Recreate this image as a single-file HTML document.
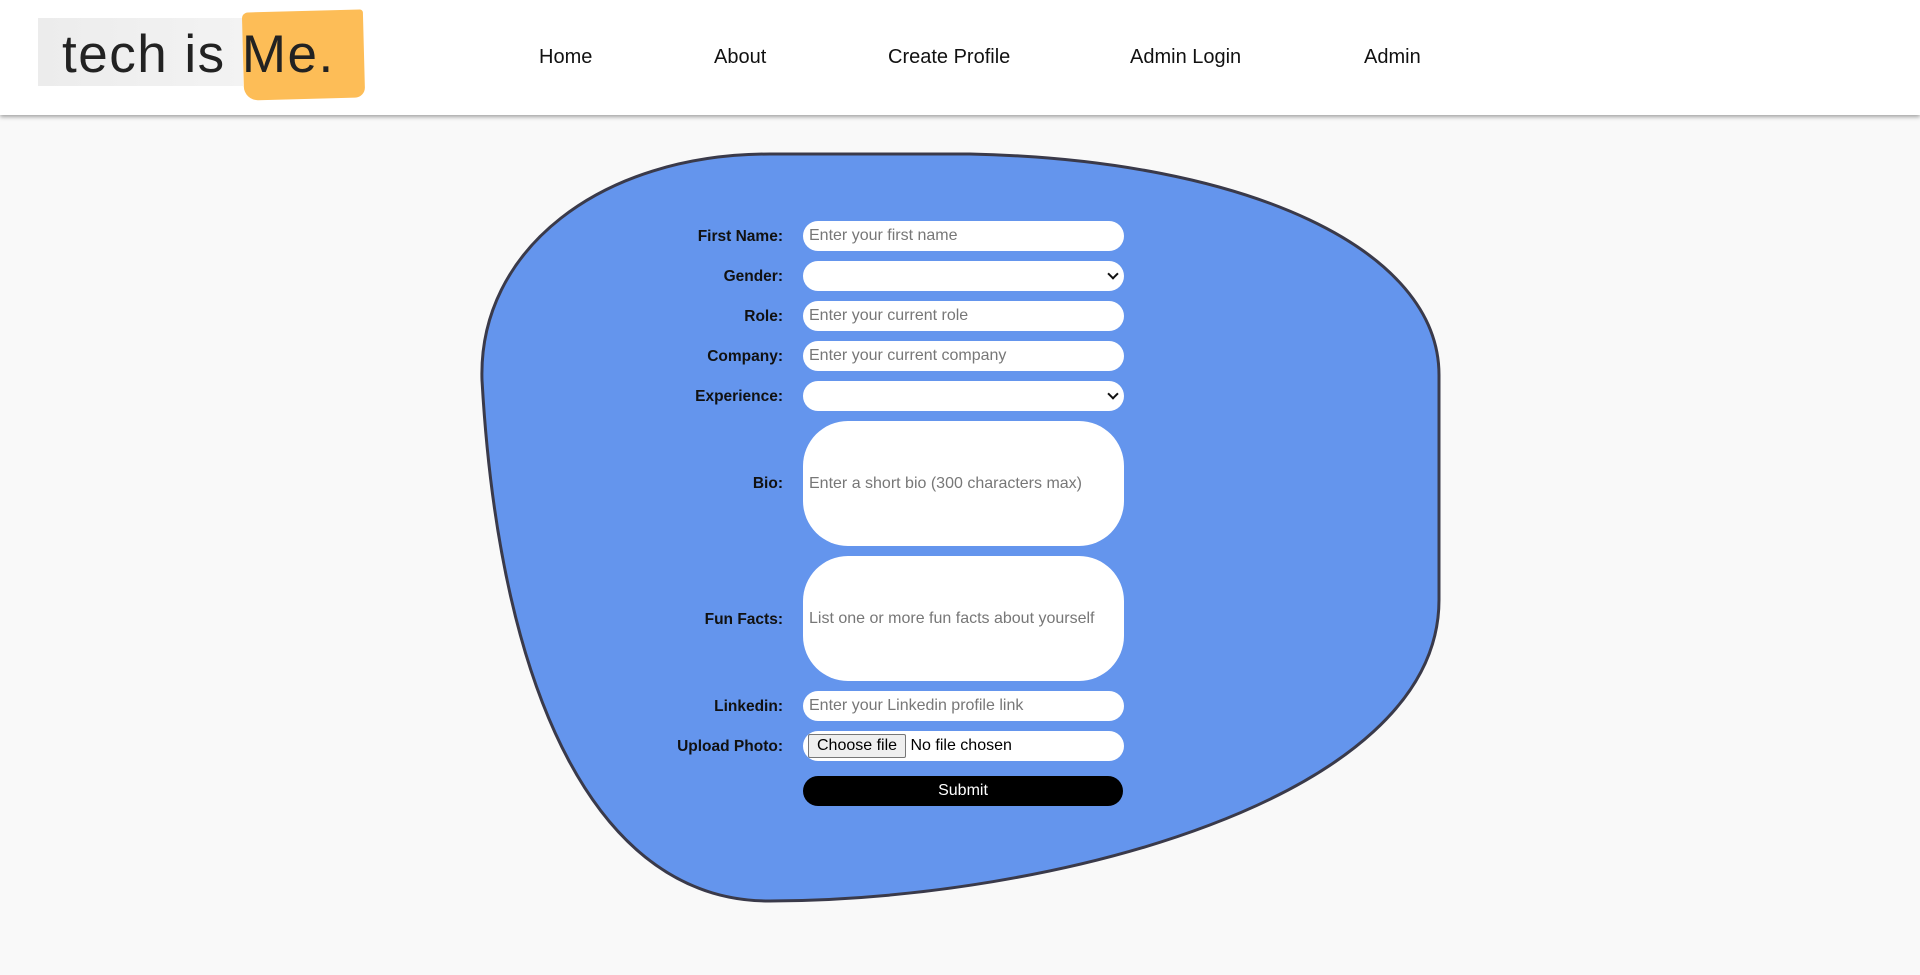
<!DOCTYPE html>
<html><head><meta charset="utf-8"><style>
*{box-sizing:border-box;margin:0;padding:0}
body{width:1920px;height:975px;background:#f9f9f9;font-family:"Liberation Sans",Arial,sans-serif;position:relative;overflow:hidden}
.hdr{position:absolute;left:0;top:0;width:1920px;height:115px;background:#fff;box-shadow:0 2px 4px rgba(0,0,0,.35)}
.logo-g{position:absolute;left:38px;top:18px;width:205px;height:68px;background:linear-gradient(90deg,#ececec,#f3f3f3)}
.logo-o{position:absolute;left:243px;top:11px;width:121px;height:88px;background:#fdbd57;border-radius:6px 3px 10px 14px;transform:rotate(-1.5deg)}
.logo-t{position:absolute;left:62px;top:24px;font-size:53px;color:#222;letter-spacing:1.5px}
.nav{position:absolute;top:46px;font-size:20px;color:#111}
.lab{position:absolute;right:1137px;font-size:15.5px;font-weight:bold;color:#111;text-align:right}
.inp{position:absolute;left:803px;width:321px;height:30px;background:#fff;border-radius:15px;font-size:16px;color:#777;padding-left:6px;line-height:30px;white-space:nowrap}
.ta{height:125px;border-radius:45px;line-height:125px}
.chev{position:absolute;right:7px;top:9px;width:8px;height:8px;border-right:2px solid #111;border-bottom:2px solid #111;transform:rotate(45deg)}
</style></head><body>
<div class="hdr">
<div class="logo-g"></div><div class="logo-o"></div>
<div class="logo-t">tech is Me.</div>
<div class="nav" style="left:539px">Home</div>
<div class="nav" style="left:714px">About</div>
<div class="nav" style="left:888px">Create Profile</div>
<div class="nav" style="left:1130px">Admin Login</div>
<div class="nav" style="left:1364px">Admin</div>
</div>
<svg style="position:absolute;left:0;top:0" width="1920" height="975"><path d="M770 154 L970 154 C1250 160 1439 250 1439 375 L1439 600 C1439 800 1050 900 770 901 C600 902 500 700 482 380 C478 250 600 154 770 154 Z" fill="#6495ed" stroke="#3a3a4a" stroke-width="3"/></svg>
<div class="lab" style="top:228px">First Name:</div><div class="inp" style="top:221px">Enter your first name</div>
<div class="lab" style="top:268px">Gender:</div><div class="inp" style="top:261px"><span class="chev"></span></div>
<div class="lab" style="top:308px">Role:</div><div class="inp" style="top:301px">Enter your current role</div>
<div class="lab" style="top:348px">Company:</div><div class="inp" style="top:341px">Enter your current company</div>
<div class="lab" style="top:388px">Experience:</div><div class="inp" style="top:381px"><span class="chev"></span></div>
<div class="lab" style="top:475px">Bio:</div><div class="inp ta" style="top:421px">Enter a short bio (300 characters max)</div>
<div class="lab" style="top:611px">Fun Facts:</div><div class="inp ta" style="top:556px">List one or more fun facts about yourself</div>
<div class="lab" style="top:698px">Linkedin:</div><div class="inp" style="top:691px">Enter your Linkedin profile link</div>
<div class="lab" style="top:738px">Upload Photo:</div>
<div class="inp" style="top:731px;color:#000;padding-left:5px"><span style="display:inline-block;height:24px;line-height:21px;margin-top:3px;vertical-align:top;border:1px solid #777;border-radius:2px;background:#efefef;padding:0 8px;font-size:16px">Choose file</span> No file chosen</div>
<div style="position:absolute;left:803px;top:776px;width:320px;height:30px;background:#000;border-radius:15px;color:#fff;font-size:16px;text-align:center;line-height:30px">Submit</div>
</body></html>
